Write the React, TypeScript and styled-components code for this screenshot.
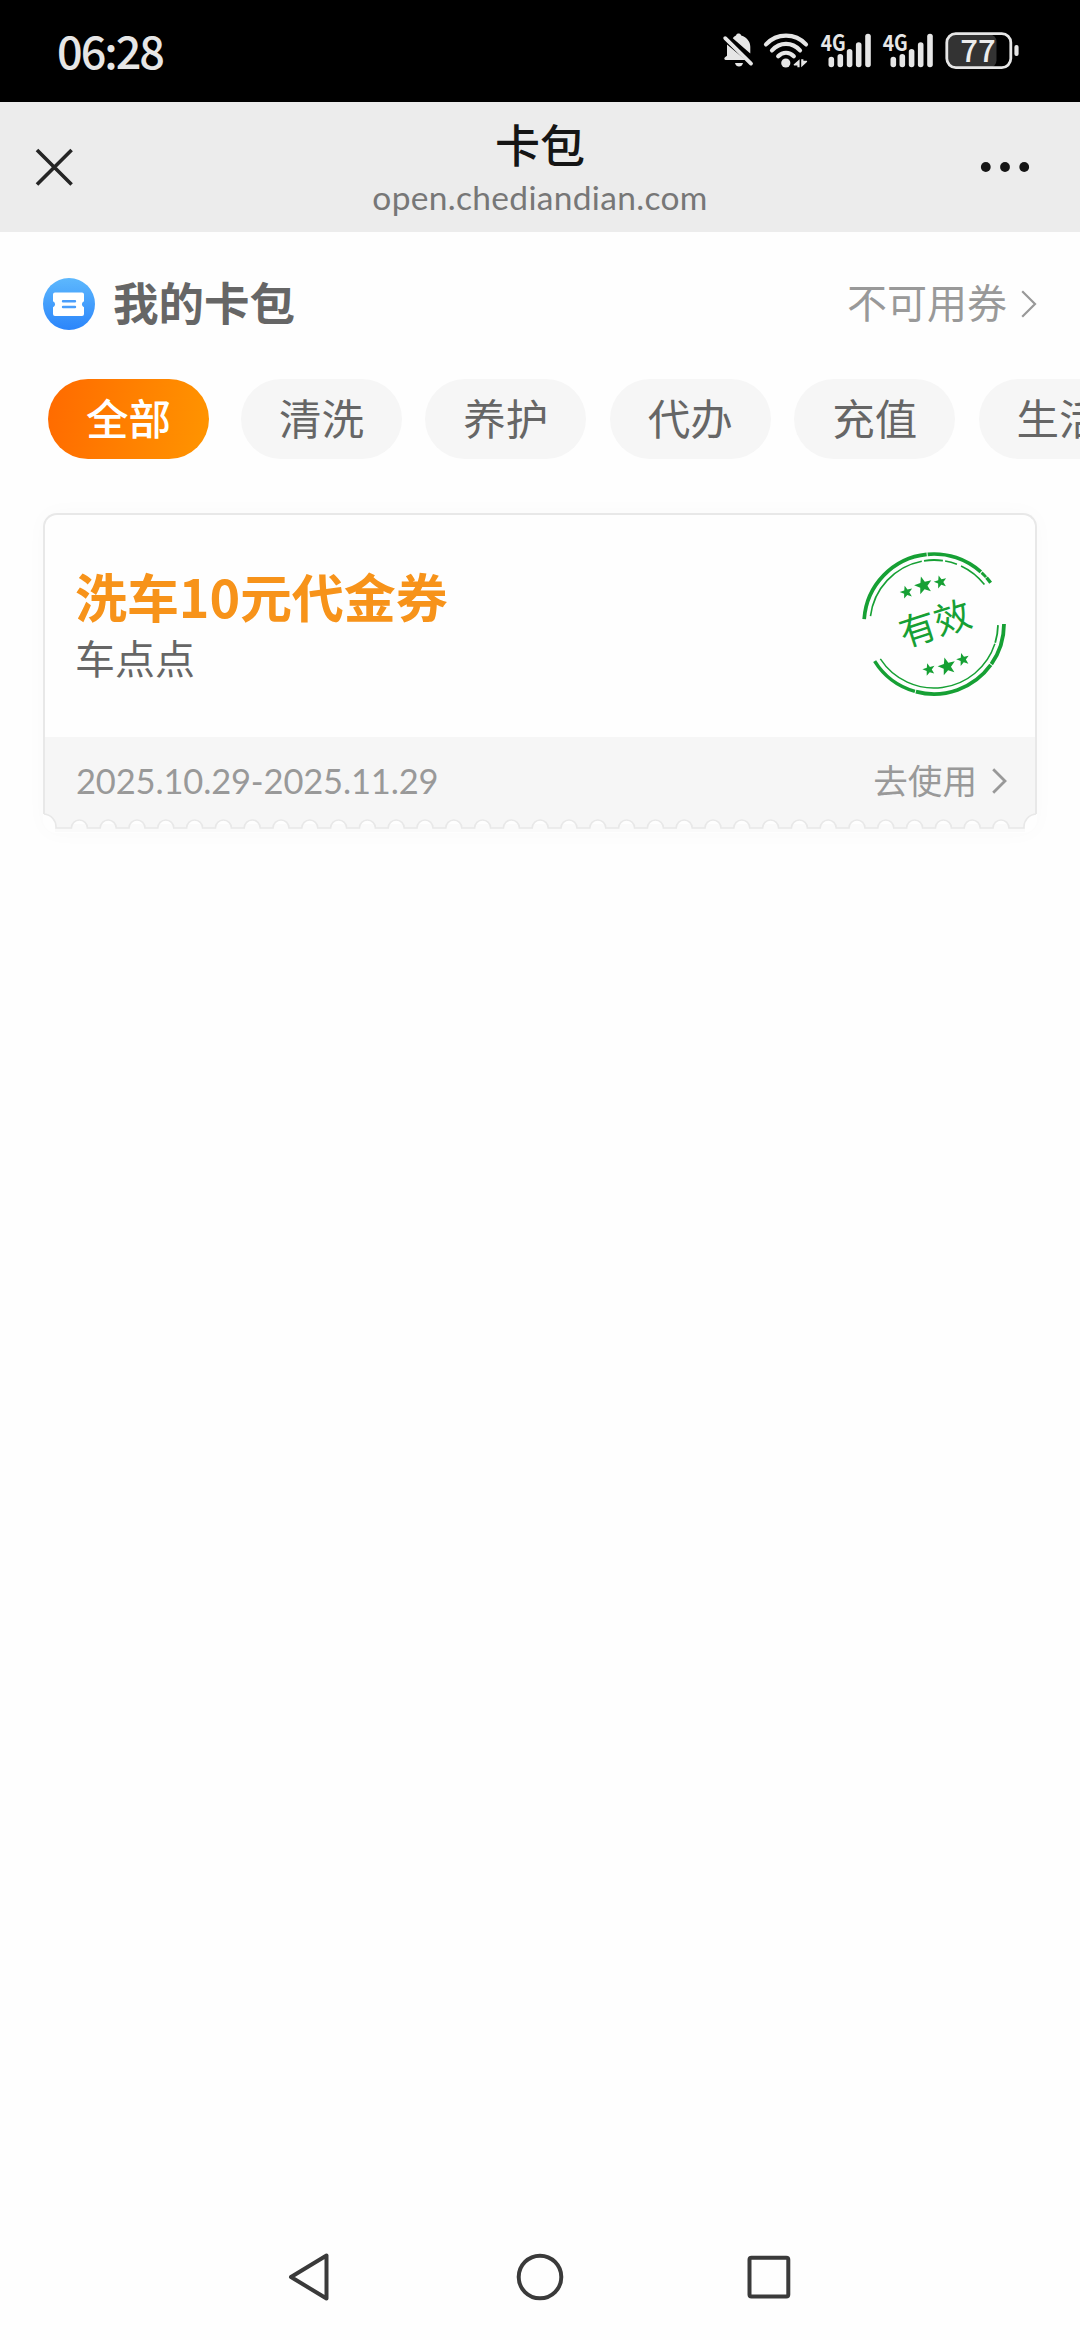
import React from "react";
import styled, { createGlobalStyle, css } from "styled-components";

const cjk = `"Noto Sans CJK SC", sans-serif`;
const latin = `Lato, "Noto Sans CJK SC", sans-serif`;

const GlobalStyle = createGlobalStyle`
  * { box-sizing: border-box; }
  body { margin: 0; background: #fefefe; font-family: ${cjk}; }
  svg { display: block; flex: none; overflow: visible; }
`;

const Screen = styled.div`
  width: 1080px;
  height: 2340px;
  display: flex;
  flex-direction: column;
  overflow: hidden;
  background: #fefefe;
`;

const StatusBar = styled.div`
  height: 102px;
  flex: none;
  background: #000;
  display: flex;
  justify-content: space-between;
  align-items: flex-start;
  padding: 32px 60px 0 57px;
`;

const Clock = styled.span`
  margin-top: -2px;
  font: 500 45px/40px ${cjk};
  letter-spacing: -2px;
  color: #e6e6e6;
`;

const StatusIcons = styled.div`
  display: flex;
  align-items: flex-start;
`;

const NavBar = styled.header`
  height: 130px;
  flex: none;
  background: #ececec;
  display: flex;
  justify-content: space-between;
  align-items: center;
  padding: 0 50px 0 35px;
`;

const NavTitle = styled.div`
  display: flex;
  flex-direction: column;
  align-items: center;
  padding: 4px 0 0 15px;
`;

const PageName = styled.h1`
  margin: 0;
  font: 500 45px/50px ${cjk};
  color: #151515;
`;

const PageHost = styled.span`
  padding-top: 5px;
  font: 400 33.5px/46px ${latin};
  letter-spacing: 0.32px;
  color: #777;
`;

const NavSide = styled.div<{ $end?: boolean }>`
  width: 120px;
  display: flex;
  justify-content: ${(p) => (p.$end ? "flex-end" : "flex-start")};
`;

const Content = styled.main`
  flex: 1;
  display: flex;
  flex-direction: column;
  padding-top: 36px;
`;

const Heading = styled.div`
  height: 72px;
  display: flex;
  align-items: center;
  justify-content: space-between;
  padding: 0 43px;
`;

const HeadingLabel = styled.div`
  display: flex;
  align-items: center;
  gap: 17px;
`;

const HeadingText = styled.h2`
  margin: 0;
  padding-bottom: 7px;
  font: 700 45.5px/56px ${cjk};
  color: #666;
`;

const MoreLink = styled.a`
  display: flex;
  align-items: center;
  gap: 14px;
  font: 400 40px/56px ${cjk};
  color: #999;
`;

const LinkText = styled.span`
  padding-bottom: 7px;
`;

const Tabs = styled.nav`
  display: flex;
  gap: 23.4px;
  margin-top: 39px;
  padding-left: 48px;
  overflow: hidden;
`;

const Tab = styled.button<{ $active?: boolean }>`
  flex: none;
  width: 161px;
  height: 80px;
  padding: 0 0 5px;
  border: 0;
  border-radius: 40px;
  font: 400 42.5px/75px ${cjk};
  color: #666;
  background: #f6f6f6;
  ${(p) =>
    p.$active &&
    css`
      margin-right: 8.6px;
      font-weight: 500;
      color: #fff;
      background: linear-gradient(100deg, #ff6a00, #ff9500);
    `}
`;

const Coupon = styled.article`
  width: 994px;
  margin: 54px 0 0 43px;
  border-radius: 14px;
  box-shadow: 0 0 22px rgba(0, 0, 0, 0.025);
`;

const CouponBody = styled.div`
  height: 224px;
  display: flex;
  justify-content: space-between;
  align-items: flex-start;
  padding: 35px 27px 0 30px;
  border: 2px solid #e8e8e8;
  border-bottom: 0;
  border-radius: 14px 14px 0 0;
  background: #fefefe;
`;

const CouponText = styled.div`
  display: flex;
  flex-direction: column;
  padding-top: 14px;
`;

const CouponName = styled.h3`
  margin: 0;
  font: 700 52px/64px ${cjk};
  letter-spacing: -0.1px;
  color: #f7931a;
`;

const CouponBrand = styled.span`
  padding-top: 1px;
  font: 400 40px/56px ${cjk};
  color: #666;
`;

const CouponFooter = styled.div`
  height: 77px;
  display: flex;
  justify-content: space-between;
  align-items: center;
  padding: 11px 28px 0 31px;
  border: solid #e8e8e8;
  border-width: 0 2px;
  background: #f6f6f6;
`;

const Period = styled.span`
  font: 400 34.5px/44px ${latin};
  letter-spacing: -0.15px;
  color: #999;
`;

const UseLink = styled.a`
  display: flex;
  align-items: center;
  gap: 15px;
  font: 400 34.6px/50px ${cjk};
  color: #999;
`;

const UseText = styled.span`
  padding-bottom: 4px;
`;

const SystemNav = styled.footer`
  height: 126px;
  flex: none;
  display: flex;
  padding: 38px 289px 0 288px;
  justify-content: space-between;
  align-items: flex-start;
`;

const GREEN = "#16a034";

const starPoints = (cx: number, cy: number, r: number, turn: number) =>
  Array.from({ length: 10 }, (_, i) => {
    const a = ((i * 36 - 90 + turn) * Math.PI) / 180;
    const k = i % 2 ? r * 0.42 : r;
    return `${(cx + k * Math.cos(a)).toFixed(2)},${(cy + k * Math.sin(a)).toFixed(2)}`;
  }).join(" ");

const polar = (r: number, deg: number) => {
  const a = (deg * Math.PI) / 180;
  return `${(74 + r * Math.cos(a)).toFixed(2)} ${(74 + r * Math.sin(a)).toFixed(2)}`;
};

const arc = (r: number, from: number, to: number) =>
  `M${polar(r, from)}A${r} ${r} 0 ${to - from > 180 ? 1 : 0} 1 ${polar(r, to)}`;

const stars: [number, number, number][] = [
  [46.5, 42.2, 6.8],
  [63.5, 35.5, 9.4],
  [80.5, 32, 6.8],
  [69, 119.5, 6.6],
  [87, 116.5, 9.4],
  [103, 109.5, 6.8],
];

const Stamp = () => (
  <svg width="148" height="148" viewBox="0 0 148 148" fill="none" stroke={GREEN}>
    <path d={arc(70, 184, 264)} strokeWidth="3.7" />
    <path d={arc(70, 264.8, 312)} strokeWidth="3.7" />
    <path d={arc(70, 312.8, 318)} strokeWidth="2.8" />
    <path d={arc(70, 318.6, 324)} strokeWidth="3.4" />
    <path d={arc(64, 187, 259)} strokeWidth="1.6" />
    <path d={arc(64, 261, 278)} strokeWidth="1.8" />
    <path d={arc(64, 280, 291)} strokeWidth="1.6" />
    <path d={arc(64, 295, 322)} strokeWidth="1.6" />
    <path d={arc(70, 0, 35)} strokeWidth="3.8" />
    <path d={arc(70, 35.8, 105)} strokeWidth="3.7" />
    <path d={arc(70, 105.8, 148)} strokeWidth="3.5" />
    <path d={arc(64, 1, 17)} strokeWidth="1.8" />
    <path d={arc(64, 18, 147)} strokeWidth="1.5" />
    {stars.map(([x, y, r]) => (
      <polygon key={x} points={starPoints(x, y, r, -16)} fill={GREEN} stroke="none" />
    ))}
    <text
      x="75.5"
      y="87"
      fontFamily="Noto Sans CJK SC, sans-serif"
      fontSize="36.5"
      textAnchor="middle"
      fill={GREEN}
      stroke="none"
      transform="rotate(-18 75 75)"
    >
      有效
    </text>
  </svg>
);

const BITES = 33;
const bitePath = Array.from({ length: BITES }, (_, i) => {
  const c = 36.4 + i * 28.8;
  return `H${(c - 8).toFixed(1)}A8 8 0 0 1 ${(c + 8).toFixed(1)} 14`;
}).join("");
const edge = `M1 0A13 13 0 0 1 13 14${bitePath}H981A13 13 0 0 1 993 0`;

const PerforatedEdge = () => (
  <svg width="994" height="19" viewBox="0 0 994 19" fill="none">
    <path d="M12 10H982V18H12Z" fill="#fafafa" />
    <path d={edge} fill="#f6f6f6" stroke="#e8e8e8" strokeWidth="1.6" />
  </svg>
);

const BellOff = () => (
  <svg width="32" height="38" viewBox="0 0 32 38" fill="#e6e6e6">
    <path d="M4 12.5 22.5 28H2.5C1 28 1 25.8 2 25.3L4 23.8Z" />
    <path d="M9.8 6.2C11 4.6 12.6 4 13 3.6 13.4 2.2 14.5 1.6 15.5 1.6S17.8 2.2 18.2 3.6C24 5.4 27.3 9.8 27.3 14.8V21.5Z" />
    <path d="M12 31H20C19.4 33.3 18 34.6 16 34.6S12.6 33.3 12 31Z" />
    <path d="M2.2 6.2 28 31.6" stroke="#e6e6e6" strokeWidth="3.8" strokeLinecap="round" />
  </svg>
);

const WifiIcon = styled.svg`
  margin-left: 8px;
`;

const Wifi = () => (
  <WifiIcon width="46" height="38" viewBox="0 0 46 38" fill="none" stroke="#e6e6e6" strokeWidth="4.2" strokeLinecap="round">
    <path d="M3 12.4C14 .8 32 .8 43 12.4" />
    <path d="M9 18.4C17 9.8 29 9.8 37 18.4" />
    <path d="M15.2 24.2C19.8 19.6 26.2 19.6 30.8 24.2" />
    <circle cx="22.8" cy="31" r="4.6" fill="#e6e6e6" stroke="none" />
    <g fill="#e6e6e6" stroke="none">
      <path d="M30.6 32.6 36.6 27.2V35.2H34.4V33.6H31Z" />
      <path d="M44.2 29.8 38.2 35.2V27.2H40.4V28.8H43.8Z" />
    </g>
  </WifiIcon>
);

const SignalIcon = styled.svg`
  margin-left: 12px;
`;

const bars = [
  [13.3, 24.7],
  [22.3, 22],
  [31.6, 17],
  [40.7, 10.3],
  [50, 1.7],
];

const Signal = () => (
  <SignalIcon width="50" height="38" viewBox="3 0 50 38" fill="#e6e6e6">
    <text x="2.8" y="18.6" fontFamily="Noto Sans CJK SC, sans-serif" fontWeight="700" fontSize="22" textLength="25" lengthAdjust="spacingAndGlyphs">
      4G
    </text>
    {bars.map(([x, y]) => (
      <rect key={x} x={x - 2.8} y={y} width="5.6" height={35.3 - y} rx="2.8" />
    ))}
  </SignalIcon>
);

const Battery = () => (
  <SignalIcon width="75" height="38" viewBox="0 0 75 38">
    <rect x="3" y="2.5" width="48.5" height="33" rx="7" fill="#333" />
    <rect x="1.8" y="1.6" width="64" height="34" rx="9" fill="none" stroke="#e6e6e6" strokeWidth="2.8" />
    <rect x="69.4" y="13" width="4.2" height="11" rx="2" fill="#e6e6e6" />
    <text x="33" y="30" fontFamily="Noto Sans CJK SC, sans-serif" fontWeight="500" fontSize="31" textAnchor="middle" fill="#ececec">
      77
    </text>
  </SignalIcon>
);

const CloseIcon = () => (
  <svg width="38" height="38" viewBox="0 0 38 38" stroke="#252525" strokeWidth="3.6">
    <path d="M2 2 36.6 36.6M36.6 2 2 36.6" />
  </svg>
);

const MoreIcon = () => (
  <svg width="50" height="12" viewBox="0 0 50 12" fill="#151515">
    <circle cx="5.8" cy="6" r="4.9" />
    <circle cx="25" cy="6" r="4.9" />
    <circle cx="44.2" cy="6" r="4.9" />
  </svg>
);

const WalletIcon = () => (
  <svg width="53" height="53" viewBox="0 0 53 53">
    <defs>
      <linearGradient id="wallet" x1="0" y1="0" x2="0" y2="1">
        <stop offset="0" stopColor="#5db8fd" />
        <stop offset="1" stopColor="#2b85fb" />
      </linearGradient>
    </defs>
    <circle cx="26" cy="26" r="26" fill="url(#wallet)" />
    <path
      d="M12 14.5H39Q41 14.5 41 16.5V23.3A3.2 3.2 0 0 0 41 29.3V36Q41 38 39 38H12Q10 38 10 36V29.3A3.2 3.2 0 0 0 10 23.3V16.5Q10 14.5 12 14.5Z"
      fill="#fff"
    />
    <path d="M20 23.2H32M20 29H32" stroke="#4a9efb" strokeWidth="2.4" strokeLinecap="round" />
  </svg>
);

const Chevron = ({ w, h, s }: { w: number; h: number; s: number }) => (
  <svg width={w} height={h} viewBox={`0 0 ${w} ${h}`} fill="none" stroke="#999" strokeWidth={s}>
    <path d={`M1.2 1.2 ${w - 2} ${h / 2} 1.2 ${h - 1.2}`} />
  </svg>
);

const tabs = ["全部", "清洗", "养护", "代办", "充值", "生活"];

export default function App() {
  return (
    <Screen>
      <GlobalStyle />
      <StatusBar>
        <Clock>06:28</Clock>
        <StatusIcons>
          <BellOff />
          <Wifi />
          <Signal />
          <Signal />
          <Battery />
        </StatusIcons>
      </StatusBar>
      <NavBar>
        <NavSide>
          <CloseIcon />
        </NavSide>
        <NavTitle>
          <PageName>卡包</PageName>
          <PageHost>open.chediandian.com</PageHost>
        </NavTitle>
        <NavSide $end>
          <MoreIcon />
        </NavSide>
      </NavBar>
      <Content>
        <Heading>
          <HeadingLabel>
            <WalletIcon />
            <HeadingText>我的卡包</HeadingText>
          </HeadingLabel>
          <MoreLink>
            <LinkText>不可用券</LinkText>
            <Chevron w={16} h={28} s={2.2} />
          </MoreLink>
        </Heading>
        <Tabs>
          {tabs.map((t, i) => (
            <Tab key={t} $active={i === 0}>
              {t}
            </Tab>
          ))}
        </Tabs>
        <Coupon>
          <CouponBody>
            <CouponText>
              <CouponName>洗车10元代金券</CouponName>
              <CouponBrand>车点点</CouponBrand>
            </CouponText>
            <Stamp />
          </CouponBody>
          <CouponFooter>
            <Period>2025.10.29-2025.11.29</Period>
            <UseLink>
              <UseText>去使用</UseText>
              <Chevron w={15} h={26} s={2.8} />
            </UseLink>
          </CouponFooter>
          <PerforatedEdge />
        </Coupon>
      </Content>
      <SystemNav>
        <svg width="44" height="50" viewBox="0 0 44 50" fill="none" stroke="#3a3a3a" strokeWidth="4" strokeLinejoin="round">
          <path d="M38.5 3.5V46.5L3 25Z" />
        </svg>
        <svg width="50" height="50" viewBox="0 0 50 50" fill="none" stroke="#3a3a3a" strokeWidth="4">
          <circle cx="25" cy="25" r="21.3" />
        </svg>
        <svg width="44" height="50" viewBox="0 0 44 50" fill="none" stroke="#3a3a3a" strokeWidth="4">
          <rect x="2.5" y="5.7" width="38.8" height="38.8" rx="2" />
        </svg>
      </SystemNav>
    </Screen>
  );
}
